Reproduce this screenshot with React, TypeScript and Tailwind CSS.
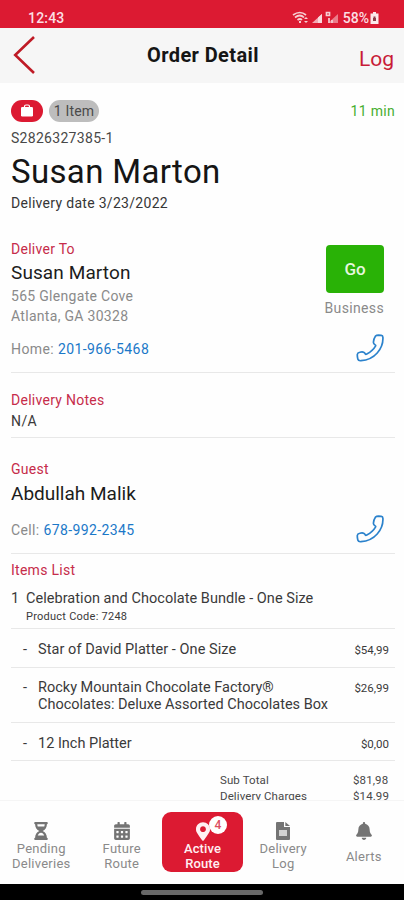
import type { ReactNode } from "react";
import { FaHourglassHalf, FaCalendarAlt, FaBell, FaMapMarkerAlt } from "react-icons/fa";

function Phone() {
  return (
    <svg className="h-[28px] w-[28px] shrink-0" viewBox="0 0 28 28" fill="none" stroke="#2b82cc" strokeWidth="1.7" strokeLinejoin="round">
      <path d="M19.4 2.2Q20.5 1.2 22.5 1.2L25.3 1.3Q26.8 1.4 26.9 3.2Q27.4 12 21.2 19Q15 26 5 26.7Q2.4 27 1.9 25.3Q1.2 23 1.3 20.5Q1.5 18.9 3.8 18.3Q6.4 17.5 8 18.4Q8.8 18.9 9.3 20Q9.8 20.7 10.8 20.1Q16.9 16.8 19.5 12.2Q20 11.2 19 10.7Q17.4 9.8 17.4 8.2Q17.6 4.8 19.4 2.2Z" />
    </svg>
  );
}

function Line() {
  return <div className="h-px w-full shrink-0 bg-[#e8e8e8]" />;
}

function Heading({ children }: { children: ReactNode }) {
  return <div className="text-[14px] leading-[20px] tracking-[0.27px] text-[#c62c4a]">{children}</div>;
}

function Item({ name, price, box }: { name: ReactNode; price: string; box: string }) {
  return (
    <div className={`flex pl-[12px] pr-[6px] text-[14.5px] leading-[17px] text-[#3a3a3a] ${box}`}>
      <span className="w-[15px]">-</span>
      <span className="flex-1 whitespace-nowrap">{name}</span>
      <span className="pt-px text-[11.5px]">{price}</span>
    </div>
  );
}

function Tab({ icon, children }: { icon: ReactNode; children: ReactNode }) {
  return (
    <div className="flex w-[81px] flex-col items-center pt-[20px] text-center text-[13px] leading-[15px] tracking-[0.25px] text-[#8a8a8a]">
      <div className="flex h-[20px] items-center text-[18px] text-[#747474]">{icon}</div>
      {children}
    </div>
  );
}

export default function App() {
  return (
    <div className="flex h-[900px] w-[404px] flex-col overflow-hidden bg-[#fefefe] font-[Roboto,sans-serif] text-[#222]">
      <div className="flex h-[28px] shrink-0 items-end justify-between bg-[#dc1a32] pl-[28px] pr-[25px] text-[#fbdfe3]">
        <span className="text-[14px] font-medium leading-[20px] tracking-[0.2px]">12:43</span>
        <div className="flex h-[20px] items-center">
          <svg className="mr-[2px] h-[14px] w-[49px]" viewBox="0 0 49 14" fill="none" stroke="#f6cfd4" strokeWidth="1.7">
            <path d="M1 4Q8-1 14 4M3 6.5Q8 2.5 12 6.5M5.5 9Q8 7 10 9" />
            <path d="M7 10h2v2H7zM12 8l2-2 2 2zM12 10l2 2 2-2z" fill="#f6cfd4" stroke="none" />
            <path d="M20 12L30 3v9z" fill="#f3a9b3" stroke="none" />
            <path d="M26 6.6l4-3.6v9h-4z" fill="#f9dade" stroke="none" />
            <path d="M36 12L46 3v9z" fill="#eb7c8a" stroke="none" />
            <path d="M34.5 1.5h3v3h-3zM37 7v5M40 9v3" />
          </svg>
          <span className="text-[14px] font-medium leading-[20px]">58%</span>
          <svg className="ml-px h-[12px] w-[9px]" viewBox="0 0 9 12">
            <path d="M3 0h3v1.5h2.5V12h-8V1.5H3z" fill="#fbe9eb" />
            <path d="M3 6h3v3H3zM3.5 6V4.5h2V6" fill="#8d3f4a" />
          </svg>
        </div>
      </div>

      <header className="grid h-[55px] shrink-0 grid-cols-[60px_1fr_60px] bg-[#f6f6f6]">
        <svg className="ml-[13px] mt-[7px] h-[40px] w-[24px]" viewBox="0 0 24 40" fill="none" stroke="#bf1b26" strokeWidth="2.6">
          <path d="M21 2L2.2 20L21 38" />
        </svg>
        <h1 className="pl-[2px] pt-[13px] text-center text-[20px] font-bold leading-[28px] tracking-[0.4px] text-[#151515]">Order Detail</h1>
        <div className="pr-[10px] pt-[17px] text-right text-[21px] leading-[28px] text-[#c81c38]">Log</div>
      </header>

      <main className="flex h-[717px] shrink-0 flex-col overflow-hidden pl-[11px] pr-[9px]">
        <div className="mt-[16px] flex h-[23px] shrink-0 items-center">
          <div className="flex h-[22px] w-[32px] items-center justify-center rounded-[11px] bg-[#dc1a32]">
            <svg className="h-[13px] w-[14px]" viewBox="0 0 14 13">
              <path d="M4.5 4V2.5Q4.5 1 6 1h2q1.5 0 1.5 1.5V4" fill="none" stroke="#fff" strokeWidth="1.2" />
              <rect x="1" y="3" width="12" height="9.5" rx="1.2" fill="#fff" />
            </svg>
          </div>
          <div className="ml-[6px] h-[22px] w-[50px] rounded-[11px] bg-[#bdbdbd] text-center text-[14px] leading-[23px] tracking-[0.2px] text-[#4a4a4a]">1 Item</div>
          <div className="ml-auto text-[14px] leading-[22px] tracking-[0.3px] text-[#46ae30]">11 min</div>
        </div>
        <div className="mt-[6px] text-[14px] leading-[20px] tracking-[0.3px] text-[#484848]">S2826327385-1</div>
        <div className="mt-[4px] text-[33px] leading-[40px] tracking-[0.35px] text-[#151515]">Susan Marton</div>
        <div className="mt-px text-[14px] leading-[20px] tracking-[0.3px] text-[#363636]">Delivery date 3/23/2022</div>

        <section className="mt-[26px] flex h-[133px] shrink-0 justify-between">
          <div>
            <Heading>Deliver To</Heading>
            <div className="mt-[2px] text-[19px] leading-[24px] tracking-[0.1px] text-[#1c1c1c]">Susan Marton</div>
            <div className="mt-px text-[14px] leading-[20px] tracking-[0.3px] text-[#8a8a8a]">565 Glengate Cove<br />Atlanta, GA 30328</div>
            <div className="mt-[13px] text-[14px] leading-[20px] tracking-[0.4px] text-[#8a8a8a]">Home: <span className="text-[#1b78c8]">201-966-5468</span></div>
          </div>
          <div className="mr-[11px] flex flex-col items-end pt-[6px]">
            <button className="h-[48px] w-[58px] rounded-[4px] bg-[#29b206] pt-[2px] text-[17px] font-medium text-[#e5f7df]">Go</button>
            <div className="mt-[5px] text-[14px] leading-[20px] tracking-[0.35px] text-[#8a8a8a]">Business</div>
            <div className="mt-[16px]"><Phone /></div>
          </div>
        </section>
        <Line />
        <section className="h-[64px] shrink-0 pt-[17px]">
          <Heading>Delivery Notes</Heading>
          <div className="text-[14px] leading-[22px] tracking-[0.4px] text-[#3a3a3a]">N/A</div>
        </section>
        <Line />
        <section className="h-[115px] shrink-0 pt-[21px]">
          <Heading>Guest</Heading>
          <div className="mt-[3px] text-[19px] leading-[24px] text-[#1c1c1c]">Abdullah Malik</div>
          <div className="mt-[9px] mr-[11px] flex h-[28px] items-center justify-between">
            <div className="pt-[2px] text-[14px] leading-[20px] tracking-[0.38px] text-[#8a8a8a]">Cell: <span className="text-[#1b78c8]">678-992-2345</span></div>
            <Phone />
          </div>
        </section>
        <Line />
        <section className="h-[74px] shrink-0 pt-[6px]">
          <Heading>Items List</Heading>
          <div className="mt-[9px] flex text-[#3a3a3a]">
            <span className="w-[15px] text-[14.5px] leading-[20px]">1</span>
            <div>
              <div className="text-[14.5px] leading-[20px] tracking-[0.04px]">Celebration and Chocolate Bundle - One Size</div>
              <div className="text-[11px] leading-[15px] tracking-[0.25px]">Product Code: 7248</div>
            </div>
          </div>
        </section>
        <Line />
        <Item name={<span className="tracking-[0.06px]">Star of David Platter - One Size</span>} price="$54,99" box="h-[38px] shrink-0 pt-[12px]" />
        <Line />
        <Item name={<>Rocky Mountain Chocolate Factory®<br />Chocolates: Deluxe Assorted Chocolates Box</>} price="$26,99" box="h-[54px] shrink-0 pt-[11px]" />
        <Line />
        <Item name="12 Inch Platter" price="$0,00" box="h-[37px] shrink-0 pt-[12px]" />
        <Line />
        <div className="grid shrink-0 grid-cols-[1fr_auto] pl-[209px] pr-[6px] pt-[11px] text-[11.5px] leading-[16px] tracking-[0.1px] text-[#484848]">
          <span>Sub Total</span><span>$81,98</span>
          <span>Delivery Charges</span><span>$14.99</span>
        </div>
      </main>

      <nav className="flex h-[84px] shrink-0 border-t border-[#f5f5f5] bg-[#fefefe] pl-px">
        <Tab icon={<FaHourglassHalf />}><span>Pending<br />Deliveries</span></Tab>
        <Tab icon={<FaCalendarAlt />}><span>Future<br />Route</span></Tab>
        <div className="relative mt-[11px] flex h-[60px] w-[81px] shrink-0 flex-col items-center rounded-[9px] bg-[#dc1a32] pt-[10px] text-center text-[13px] font-medium leading-[15px] text-[#fff0f2]">
          <FaMapMarkerAlt className="h-[19px] w-[14px]" />
          <span className="absolute left-[47px] top-[4px] h-[18px] w-[18px] rounded-full bg-white text-[12px] leading-[18px] text-[#dc4d60]">4</span>
          <span className="tracking-[0.1px]">Active<br />Route</span>
        </div>
        <Tab
          icon={
            <svg className="h-[18px] w-[14px]" viewBox="0 0 14 18" fill="currentColor">
              <path d="M1 0h7v5h6v12q0 1-1 1H1q-1 0-1-1V1q0-1 1-1zM9.3 0L14 4H9.3z" />
              <path d="M3 8h8v6H3z" fill="#d2d2d2" />
            </svg>
          }
        >
          <span>Delivery<br />Log</span>
        </Tab>
        <Tab icon={<FaBell />}><span className="pt-[8px]">Alerts</span></Tab>
      </nav>
      <div className="flex h-[16px] shrink-0 justify-center bg-black pt-[6px]">
        <div className="h-[5px] w-[122px] rounded-full bg-[#686868]" />
      </div>
    </div>
  );
}
